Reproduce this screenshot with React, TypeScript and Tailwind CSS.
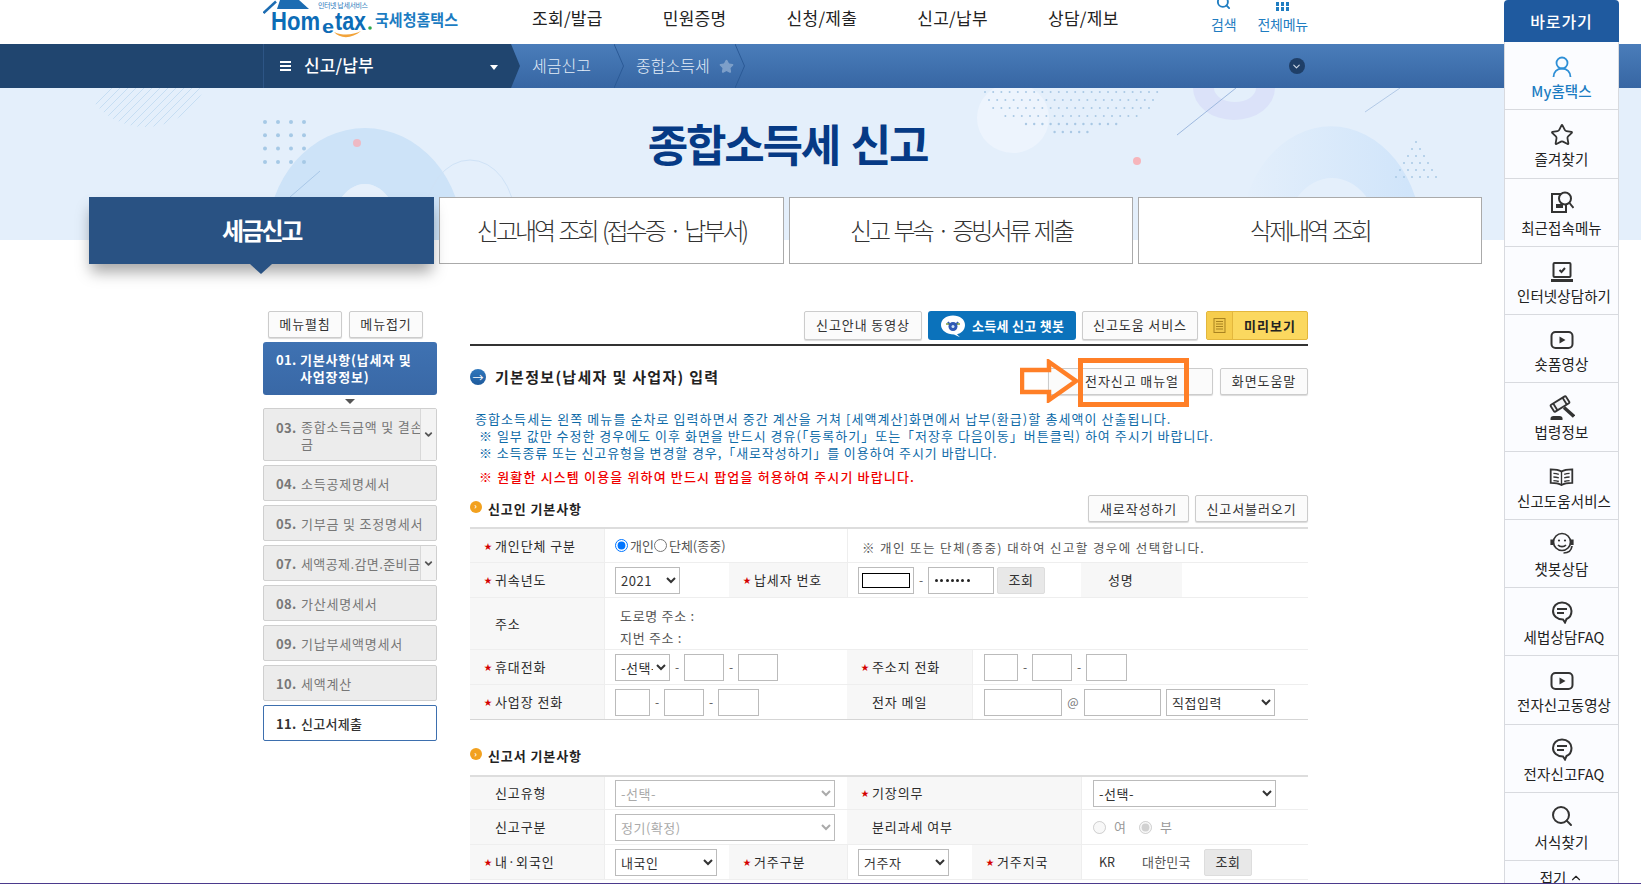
import { ChevronDown, ChevronUp, Search, Star } from 'lucide-react';
import type { ReactNode } from 'react';

const sideIcon = 'h-[24px] w-[24px] text-[#333]';

function UserIcon() {
  return (
    <svg viewBox="0 0 24 24" className="h-[24px] w-[24px] text-[#2e8fd6]" fill="none" stroke="currentColor" strokeWidth="1.8">
      <circle cx="12" cy="8" r="5.5" />
      <path d="M3.5 22c0-5 3.5-8.500 8.500-8.500s8.500 3.500 8.500 8.500" />
    </svg>
  );
}

function RecentIcon() {
  return (
    <svg viewBox="0 0 24 24" className="h-[24px] w-[24px] -translate-y-[2px] text-[#333]" fill="none" stroke="currentColor" strokeWidth="2">
      <path d="M11 4H2v18h14v-7" />
      <circle cx="15" cy="8.500" r="6" />
      <path d="M19.500 13l4 5" />
      <path d="M6 14h7v4H6z" fill="currentColor" stroke="none" />
    </svg>
  );
}

function LaptopIcon() {
  return (
    <svg viewBox="0 0 24 24" className={sideIcon} fill="none" stroke="currentColor" strokeWidth="2">
      <rect x="3.500" y="3" width="17" height="14" rx="1" />
      <path d="M1 20.500h22" strokeWidth="3" />
      <path d="M9.500 10l2 2 3.500-4" />
    </svg>
  );
}

function PlayIcon() {
  return (
    <svg viewBox="0 0 24 24" className={sideIcon} fill="none" stroke="currentColor" strokeWidth="2">
      <rect x="1.500" y="4" width="21" height="16" rx="4" />
      <path d="M9.500 8.500l6 3.500-6 3.500z" fill="currentColor" stroke="none" />
    </svg>
  );
}

function GavelIcon() {
  return (
    <svg viewBox="0 0 26 26" className="h-[26px] w-[26px] text-[#333] -my-[1px]" fill="none" stroke="currentColor" strokeWidth="1.800">
      <g transform="rotate(-32 11 9)">
        <rect x="2" y="5" width="18" height="8" rx="1" fill="#f2f3f6" />
        <path d="M5.500 5v8M16.500 5v8" />
      </g>
      <path d="M15 12.500l10 9" strokeWidth="3.400" />
      <path d="M1.500 25v-1.500c0-1.500 1-2.500 3-2.500h6c2 0 3 1 3 2.500V25z" fill="currentColor" stroke="none" />
    </svg>
  );
}

function BookIcon() {
  return (
    <svg viewBox="0 0 26 20" className="my-[3px] h-[18px] w-[25px] text-[#333]" fill="none" stroke="currentColor" strokeWidth="2">
      <path d="M13 4C10 2 6 1.500 1 1.500v15c5 0 9 .5 12 2.500 3-2 7-2.500 12-2.500v-15C20 1.500 16 2 13 4z" />
      <path d="M13 4v15M4 6c2 0 4 .3 6 1M4 10c2 0 4 .3 6 1M4 14c2 0 4 .3 6 1M22 6c-2 0-4 .3-6 1M22 10c-2 0-4 .3-6 1M22 14c-2 0-4 .3-6 1" strokeWidth="1.500" />
    </svg>
  );
}

function BotIcon() {
  return (
    <svg viewBox="0 0 26 24" className="h-[24px] w-[26px] -translate-y-[2px] text-[#333]" fill="none" stroke="currentColor" strokeWidth="1.700">
      <circle cx="13" cy="11" r="8.500" />
      <path d="M3 14V8.500M23 14V8.500" strokeWidth="3.200" />
      <circle cx="10" cy="9.500" r="1.100" fill="currentColor" stroke="none" />
      <circle cx="16" cy="9.500" r="1.100" fill="currentColor" stroke="none" />
      <path d="M9 14c2 2.200 6 2.200 8 0M23 15c-.5 4-3.500 7-8.500 7" />
    </svg>
  );
}

function FaqIcon() {
  return (
    <svg viewBox="0 0 24 24" className="h-[24px] w-[24px] -translate-y-[1px] text-[#333]" fill="none" stroke="currentColor" strokeWidth="2">
      <path d="M12 2.500c5.500 0 9.500 3.800 9.500 8.500 0 4-2.500 7-5 8l-1.500 3.500-2-3c-6 0-10-3.800-10-8.500S6.500 2.500 12 2.500z" />
      <path d="M7 9h10M7 13h7" strokeWidth="2.200" />
    </svg>
  );
}

function ChatbotBadge() {
  return (
    <svg viewBox="0 0 26 24" className="mr-[6px] h-[24px] w-[26px] shrink-0">
      <path d="M13 1.500c7 0 12 4 12 9.500 0 5-4 8.500-8 9.200l3 3-6-2.700C7 20.500 1 16.500 1 11S6 1.500 13 1.500z" fill="#fff" />
      <path d="M8 8l2 3M18 8l-2 3" stroke="#2f58b5" strokeWidth="2" />
      <path d="M6 10l14 0" stroke="#7c9a3c" strokeWidth="1.500" />
      <circle cx="13" cy="12.500" r="4.500" fill="#2f58b5" />
      <circle cx="13" cy="12.500" r="1.500" fill="#cfe3f7" />
    </svg>
  );
}

const sideItems: { icon: ReactNode; label: string; active?: boolean }[] = [
  { icon: <UserIcon />, label: 'My홈택스', active: true },
  { icon: <Star className={sideIcon} strokeWidth={1.800} />, label: '즐겨찾기' },
  { icon: <RecentIcon />, label: '최근접속메뉴' },
  { icon: <LaptopIcon />, label: '인터넷상담하기' },
  { icon: <PlayIcon />, label: '숏폼영상' },
  { icon: <GavelIcon />, label: '법령정보' },
  { icon: <BookIcon />, label: '신고도움서비스' },
  { icon: <BotIcon />, label: '챗봇상담' },
  { icon: <FaqIcon />, label: '세법상담FAQ' },
  { icon: <PlayIcon />, label: '전자신고동영상' },
  { icon: <FaqIcon />, label: '전자신고FAQ' },
  { icon: <Search className="h-[24px] w-[24px] -translate-y-[2px] text-[#333]" strokeWidth={2} />, label: '서식찾기' },
];

const topMenu = ['조회/발급', '민원증명', '신청/제출', '신고/납부', '상담/제보'];

function Logo() {
  return (
    <svg viewBox="0 0 197 44" className="h-[44px] w-[197px] shrink-0">
      <path d="M14 9 L17 0 L36 0 L46 9 Z" fill="#1c6cb2" />
      <path d="M0.500 13 L13 1.500" stroke="#1c6cb2" strokeWidth="2.500" fill="none" />
      <text x="55" y="8" fontSize="7" fill="#2a78bb" textLength="50">인터넷 납세서비스</text>
      <text fontWeight="700" fill="#0c6cb6" fontFamily="Liberation Sans">
        <tspan x="8" y="30" fontSize="26" textLength="49" lengthAdjust="spacingAndGlyphs">Hom</tspan>
        <tspan x="59" y="33" fontSize="19" textLength="12" lengthAdjust="spacingAndGlyphs">e</tspan>
        <tspan x="72" y="30" fontSize="26" textLength="31" lengthAdjust="spacingAndGlyphs">tax</tspan>
      </text>
      <circle cx="107" cy="28" r="1.800" fill="#2ba84a" />
      <path d="M71 32 C77 39 89 39 98 31 C90 35 80 36 71 32 Z" fill="#f2a33a" />
      <text x="112" y="26" fontSize="15.500" fontWeight="700" fill="#1c7cc2" textLength="83" lengthAdjust="spacingAndGlyphs">국세청홈택스</text>
    </svg>
  );
}

function HeroArt() {
  const dots: ReactNode[] = [];
  // dotted half circle under the nav bar
  for (let r = 0; r < 6; r++) {
    for (let c = 0; c < 22; c++) {
      const x = 985 + c * 8.200 + (r % 2 ? 4 : 0);
      const y = 92 + r * 8;
      const dx = x - 1071;
      const dy = y - 88;
      if (dx * dx + dy * dy * 3.800 < 88 * 88) {
        dots.push(<circle key={`${r}-${c}`} cx={x} cy={y} r={r > 3 ? 1.200 : 1} fill="#a9c8e4" />);
      }
    }
  }
  const grid: ReactNode[] = [];
  for (let r = 0; r < 4; r++) {
    for (let c = 0; c < 4; c++) {
      grid.push(<circle key={`g${r}-${c}`} cx={265 + c * 13} cy={122 + r * 13.300} r="2" fill="#a6c9e6" />);
    }
  }
  const tri: ReactNode[] = [];
  for (let r = 0; r < 6; r++) {
    for (let c = 0; c <= r; c++) {
      tri.push(<circle key={`t${r}-${c}`} cx={1412 - r * 4 + c * 8 + 4} cy={142 + r * 7} r="1" fill="#a9c8e4" />);
    }
  }
  const hatch: ReactNode[] = [];
  for (let i = 0; i < 24; i++) {
    hatch.push(<line key={i} x1={60 + i * 8} y1={140} x2={60 + i * 8 + 60} y2={80} stroke="#c6def3" strokeWidth="1" />);
  }
  return (
    <svg viewBox="0 88 1641 152" className="absolute inset-0 h-full w-full">
      <defs>
        <clipPath id="hatch-clip">
          <circle cx="145" cy="62" r="65" />
        </clipPath>
        <linearGradient id="arch-fade" x1="0" x2="1" y1="0" y2="0">
          <stop offset="0" stopColor="#e4effb" />
          <stop offset="1" stopColor="#cfe4fa" />
        </linearGradient>
      </defs>
      <g clipPath="url(#hatch-clip)">{hatch}</g>
      <path d="M267 240a98 112 0 0 1 196 0h-62a36 56 0 0 0-72 0z" fill="#cde3f8" />
      <path d="M329 240a36 56 0 0 1 72 0z" fill="#e6f0fb" />
      <ellipse cx="470" cy="220" rx="45" ry="60" fill="none" stroke="#cfe2f6" strokeWidth="1" />
      {grid}
      <ellipse cx="357" cy="143" rx="4" ry="4" fill="#eeb9c4" />
      <line x1="290" y1="197" x2="320" y2="171" stroke="#a9c8e8" strokeWidth="1" />
      <ellipse cx="1013" cy="118" rx="36" ry="35" fill="#edf4fd" />
      {dots}
      <path d="M1193 88a41 32 0 0 0 82 0h-19a21 14 0 0 1-42 0z" fill="#dbe2f9" />
      <line x1="1177" y1="135" x2="1236" y2="88" stroke="#9db8de" strokeWidth="1" />
      <line x1="1365" y1="112" x2="1400" y2="88" stroke="#b2c9e6" strokeWidth="1" />
      <ellipse cx="1137" cy="161" rx="4" ry="4" fill="#f6b5bb" />
      <path d="M1240 240a80 100 0 0 1 182 0h-42a48 62 0 0 0-96 0z" fill="url(#arch-fade)" />
      {tri}
    </svg>
  );
}

function Tab({ children, active, wide }: { children: ReactNode; active?: boolean; wide?: boolean }) {
  if (active) {
    return (
      <div className="relative flex h-[67px] w-[345px] items-center justify-center bg-[#295283] pb-[2px] text-[24px] font-semibold tracking-[-2.300px] text-white shadow-[0_10px_14px_-2px_rgba(0,0,0,0.35)]">
        {children}
        <span className="absolute left-[161px] top-[67px] h-0 w-0 border-x-[11px] border-t-[10px] border-x-transparent border-t-[#295283]" />
      </div>
    );
  }
  return (
    <div className={`flex h-[67px] items-center justify-center border border-[#aaaaaa] bg-white pb-[2px] text-[24px] font-light tracking-[-3px] [word-spacing:3px] text-[#333] ${wide ? 'w-[345px]' : 'w-[344px]'}`}>
      {children}
    </div>
  );
}

function Btn({ children, className = '' }: { children: ReactNode; className?: string }) {
  return (
    <button className={`flex h-[27px] items-center justify-center rounded-[2px] border border-[#ccc] bg-[#fbfbfb] text-[13px] tracking-[0.900px] text-[#333] shadow-[0_1px_1px_rgba(0,0,0,0.15)] ${className}`}>
      {children}
    </button>
  );
}

function GrayBtn({ children, className = '' }: { children: ReactNode; className?: string }) {
  return (
    <button className={`flex h-[27px] w-[48px] items-center justify-center rounded-[2px] border border-[#ddd] bg-[#e8e8e8] text-[13px] tracking-[0.500px] text-[#333] ${className}`}>
      {children}
    </button>
  );
}

function SideStep({ no, lines, arrow, tall, track = 'tracking-[0.800px]' }: { no: string; lines: string[]; arrow?: boolean; tall?: boolean; track?: string }) {
  return (
    <div className={`flex rounded-[2px] border border-[#cfcfcf] bg-[#ececec] text-[13px] text-[#777] ${track} ${tall ? 'h-[53px]' : 'h-[36px]'}`}>
      <div className="flex min-w-0 flex-1 pl-[12px]">
        <span className={`w-[25px] shrink-0 font-bold tracking-[0.300px] ${tall ? 'pt-[9px]' : 'mt-[1px] self-center'}`}>{no}</span>
        <div className={`min-w-0 overflow-hidden whitespace-nowrap ${tall ? 'pt-[9px] leading-[17px]' : 'mt-[1px] self-center'}`}>
          {lines.map((l) => (
            <div key={l}>{l}</div>
          ))}
        </div>
      </div>
      {arrow && (
        <div className="flex w-[16px] shrink-0 items-center justify-center border-l border-[#d8d8d8] bg-[#f3f3f3]">
          <ChevronDown className="h-[11px] w-[11px] text-[#555]" strokeWidth={4} />
        </div>
      )}
    </div>
  );
}

function Th({ children, w, req }: { children?: ReactNode; w: string; req?: boolean }) {
  return (
    <div className={`flex shrink-0 items-center bg-[#f7f7f7] pl-[14px] text-[13px] tracking-[0.900px] text-[#2b2b2b] ${w}`}>
      <span className="w-[11px] shrink-0 text-[8px] leading-none text-[#d40000]">{req ? '★' : ''}</span>
      <span className="whitespace-nowrap">{children}</span>
    </div>
  );
}

function Td({ children, w, pad = 'pl-[10px]' }: { children?: ReactNode; w: string; pad?: string }) {
  return <div className={`flex shrink-0 items-center border-l border-[#eeeeee] text-[13px] ${pad} ${w}`}>{children}</div>;
}

function Row({ children, h = 'h-[35px]', last }: { children: ReactNode; h?: string; last?: boolean }) {
  return <div className={`flex border-b ${last ? 'border-[#d5d5d5]' : 'border-[#eeeeee]'} ${h}`}>{children}</div>;
}

function Input({ w, children }: { w: string; children?: ReactNode }) {
  return <div className={`flex h-[27px] shrink-0 items-center border border-[#bbbbbb] bg-white ${w}`}>{children}</div>;
}

function Dash() {
  return <span className="w-[14px] shrink-0 text-center text-[12px] text-[#555]">-</span>;
}

function Sel({ w, value, disabled }: { w: string; value: string; disabled?: boolean }) {
  return (
    <select disabled={disabled} defaultValue={value} className={`h-[27px] shrink-0 border border-[#bbbbbb] bg-white pl-[1px] text-[13px] tracking-[0.500px] ${disabled ? 'text-[#aaa]' : 'text-[#333]'} ${w}`}>
      <option>{value}</option>
    </select>
  );
}

function SubHead({ children }: { children: ReactNode }) {
  return (
    <div className="flex items-center gap-[6px] text-[13px] font-bold tracking-[0.900px] text-[#222]">
      <span className="mb-[4px] flex h-[12px] w-[12px] items-center justify-center rounded-full bg-[#f2a11f]">
        <span className="mb-[0.500px] text-[8px] leading-none text-white">›</span>
      </span>
      {children}
    </div>
  );
}

export default function App() {
  return (
    <div className="relative h-[884px] w-[1641px] overflow-hidden bg-white font-['Noto_Sans_CJK_KR','Liberation_Sans',sans-serif] text-[#333]">
      {/* top header */}
      <div className="flex h-[44px] items-center pl-[263px]">
        <Logo />
        <div className="ml-[72px] flex gap-[60px] pb-[8px] text-[17px] tracking-[0.300px] text-[#222]">
          {topMenu.map((m) => (
            <span key={m}>{m}</span>
          ))}
        </div>
        <div className="ml-[92px] flex gap-[20px] self-start text-[14px] tracking-[-0.300px] text-[#1f7dc1]">
          <div className="flex w-[26px] flex-col items-center">
            <Search className="-mt-[5px] h-[15px] w-[15px]" strokeWidth={3} />
            <span className="mt-[2px] leading-[24px]">검색</span>
          </div>
          <div className="flex w-[52px] flex-col items-center">
            <div className="grid h-[10px] grid-cols-3 gap-[1.500px] pt-[2px]">
              {[0, 1, 2, 3, 4, 5].map((i) => (
                <span key={i} className="h-[3.500px] w-[3.500px] bg-[#1f7dc1]" />
              ))}
            </div>
            <span className="mt-[2px] leading-[24px]">전체메뉴</span>
          </div>
        </div>
      </div>

      {/* nav bar */}
      <div className="flex h-[44px] items-center bg-gradient-to-b from-[#4a7dba] to-[#3766a3] text-white">
        <div className="h-full w-[520px] shrink-0 bg-[#20456f] pl-[263px] [clip-path:polygon(0_0,511px_0,520px_22px,511px_44px,0_44px)]">
          <div className="flex h-full items-center border-l border-[#2d5585] pl-[16px] pr-[22px]">
            <div className="flex flex-col gap-[2px]">
              <span className="h-[2px] w-[11px] bg-white" />
              <span className="h-[2px] w-[11px] bg-white" />
              <span className="h-[2px] w-[11px] bg-white" />
            </div>
            <span className="ml-[13px] mb-[2px] text-[17px] font-medium tracking-[0.100px]">신고/납부</span>
            <span className="ml-auto mt-[2px] h-0 w-0 border-x-[4px] border-t-[5px] border-x-transparent border-t-white" />
          </div>
        </div>
        <span className="ml-[12px] mb-[2px] w-[82px] text-[16px] font-light text-[#e4edf8]">세금신고</span>
        <svg viewBox="0 0 10 44" className="h-[44px] w-[10px] shrink-0" fill="none" stroke="#2b5a96" strokeWidth="1">
          <path d="M0 0l9.500 22L0 44" />
        </svg>
        <span className="ml-[12px] mb-[2px] whitespace-nowrap text-[16px] font-light text-[#e4edf8]">종합소득세</span>
        <Star className="ml-[9px] h-[15px] w-[15px] fill-[#7d9fc9] text-[#7d9fc9]" />
        <svg viewBox="0 0 10 44" className="ml-[1px] h-[44px] w-[10px] shrink-0" fill="none" stroke="#2b5a96" strokeWidth="1">
          <path d="M0 0l9.500 22L0 44" />
        </svg>
        <span className="ml-[544px] flex h-[16px] w-[16px] items-center justify-center rounded-full bg-[#1f3f68]">
          <ChevronDown className="h-[11px] w-[11px] text-[#cfd9e6]" strokeWidth={2.500} />
        </span>
      </div>

      {/* hero */}
      <div className="relative h-[152px] bg-[#e4effb]">
        <HeroArt />
        <h1 className="relative pr-[66px] pt-[27px] text-center text-[44px] font-bold leading-[56px] tracking-[-2.200px] [word-spacing:4px] text-[#063a85]">
          종합소득세 신고
        </h1>
      </div>

      {/* tabs */}
      <div className="relative -mt-[43px] flex gap-[5px] pl-[89px]">
        <Tab active>세금신고</Tab>
        <Tab wide>신고내역 조회 (접수증 · 납부서)</Tab>
        <Tab>신고 부속 · 증빙서류 제출</Tab>
        <Tab>삭제내역 조회</Tab>
      </div>

      {/* body */}
      <div className="flex pl-[263px] pt-[47px]">
        <div className="w-[174px] shrink-0">
          <div className="flex gap-[7px] pl-[5px]">
            <Btn className="w-[74px] bg-[#eeeeee] pb-[2px] tracking-[0.500px]">메뉴펼침</Btn>
            <Btn className="w-[74px] bg-[#eeeeee] pb-[2px] tracking-[0.500px]">메뉴접기</Btn>
          </div>
          <div className="mt-[4px] flex h-[53px] rounded-[3px] bg-gradient-to-b from-[#3f72b2] to-[#3968a6] pl-[13px] pt-[9px] text-[13px] font-bold leading-[17px] tracking-[0.800px] text-white">
            <span className="w-[24px] shrink-0 tracking-[0.300px]">01.</span>
            <span>
              기본사항(납세자 및
              <br />
              사업장정보)
            </span>
          </div>
          <div className="mx-auto my-[4px] h-0 w-0 border-x-[5px] border-t-[5px] border-x-transparent border-t-[#555]" />
          <div className="flex flex-col gap-[4px]">
            <SideStep tall arrow no="03." lines={['종합소득금액 및 결손', '금']} />
            <SideStep no="04." lines={['소득공제명세서']} />
            <SideStep no="05." lines={['기부금 및 조정명세서']} />
            <SideStep arrow track="tracking-[0.400px]" no="07." lines={['세액공제.감면.준비금']} />
            <SideStep no="08." lines={['가산세명세서']} />
            <SideStep no="09." lines={['기납부세액명세서']} />
            <SideStep no="10." lines={['세액계산']} />
            <div className="flex h-[36px] items-center rounded-[2px] border border-[#3d6fae] bg-white pl-[12px] pt-[2px] text-[13px] font-medium tracking-[0.300px] text-[#333]">
              <span className="w-[25px] font-bold">11.</span>
              신고서제출
            </div>
          </div>
        </div>

        <div className="ml-[33px] w-[838px] shrink-0">
          <div className="flex h-[29px] justify-end gap-[6px]">
            <Btn className="h-[29px] w-[118px] pb-[2px]">신고안내 동영상</Btn>
            <button className="flex h-[29px] w-[148px] items-center rounded-[3px] bg-[#0b72bb] pl-[12px] text-[13px] font-bold tracking-[0.300px] text-white">
              <ChatbotBadge />
              소득세 신고 챗봇
            </button>
            <Btn className="mr-[2px] h-[29px] w-[116px] pb-[2px]">신고도움 서비스</Btn>
            <button className="flex h-[29px] w-[102px] items-center rounded-[2px] border border-[#e3b73d] bg-[#fbd85f] text-[13px] font-bold tracking-[1px] text-[#222]">
              <span className="flex h-full w-[26px] items-center justify-center border-r border-[#e3b73d] bg-[#f6cd4d]">
                <svg viewBox="0 0 13 15" className="h-[15px] w-[13px]" fill="none" stroke="#a98320" strokeWidth="1">
                  <rect x="1" y="0.500" width="11" height="14" fill="#f1c94f" />
                  <path d="M3 3.500h7M3 6h7M3 8.500h7M3 11h7" />
                </svg>
              </span>
              <span className="flex-1 text-center">미리보기</span>
            </button>
          </div>
          <div className="mt-[4px] h-[2px] bg-[#333]" />

          <div className="mt-[22px] flex h-[27px] items-center">
            <span className="mb-[9px] flex h-[16px] w-[16px] items-center justify-center rounded-full bg-gradient-to-b from-[#2f78bd] to-[#1e5a9c] text-[11px] leading-none text-white">→</span>
            <span className="mb-[9px] ml-[9px] text-[15px] font-bold tracking-[1.300px] text-[#222]">기본정보(납세자 및 사업자) 입력</span>
            <Btn className="ml-auto w-[165px] pb-[2px] pl-[3px] text-[#222]">전자신고 매뉴얼</Btn>
            <Btn className="ml-[7px] w-[88px] pb-[2px]">화면도움말</Btn>
          </div>

          <div className="mt-[15px] pl-[5px] text-[13px] leading-[17px] tracking-[1.080px] text-[#0f6ba8]">
            <p>종합소득세는 왼쪽 메뉴를 순차로 입력하면서 중간 계산을 거쳐 [세액계산]화면에서 납부(환급)할 총세액이 산출됩니다.</p>
            <p className="pl-[4px] tracking-[1px]">※ 일부 값만 수정한 경우에도 이후 화면을 반드시 경유(「등록하기」또는「저장후 다음이동」버튼클릭) 하여 주시기 바랍니다.</p>
            <p className="pl-[4px] tracking-[0.900px]">※ 소득종류 또는 신고유형을 변경할 경우,「새로작성하기」를 이용하여 주시기 바랍니다.</p>
            <p className="mt-[7px] pl-[4px] font-medium tracking-[1.150px] text-[#f00000]">※ 원활한 시스템 이용을 위하여 반드시 팝업을 허용하여 주시기 바랍니다.</p>
          </div>

          <div className="mt-[10px] flex h-[27px] items-center">
            <SubHead>신고인 기본사항</SubHead>
            <Btn className="ml-auto w-[101px]">새로작성하기</Btn>
            <Btn className="ml-[6px] w-[113px]">신고서불러오기</Btn>
          </div>

          {/* 신고인 table */}
          <div className="mt-[5px] border-t-2 border-[#dddddd]">
            <Row h="h-[34px]">
              <Th w="w-[134px]" req>개인단체 구분</Th>
              <Td w="w-[243px]">
                <input type="radio" name="kind" defaultChecked className="h-[13px] w-[13px]" />
                <span className="ml-[2px] text-[#555]">개인</span>
                <input type="radio" name="kind" className="h-[13px] w-[13px]" />
                <span className="ml-[2px] text-[#555]">단체(종중)</span>
              </Td>
              <Td w="w-[461px]" pad="pl-[11px]">
                <span className="ml-[3px] mt-[5px] text-[12.500px] tracking-[1.400px] text-[#555]">※ 개인 또는 단체(종중) 대하여 신고할 경우에 선택합니다.</span>
              </Td>
            </Row>
            <Row>
              <Th w="w-[134px]" req>귀속년도</Th>
              <Td w="w-[125px]"><Sel w="w-[65px]" value="2021" /></Td>
              <Th w="w-[118px]" req>납세자 번호</Th>
              <Td w="w-[234px]">
                <Input w="w-[56px] justify-center">
                  <span className="h-[15px] w-[48px] border border-black" />
                </Input>
                <Dash />
                <Input w="w-[66px] gap-[2.300px] pl-[6px]">
                  {[0, 1, 2, 3, 4, 5, 6].map((i) => (
                    <span key={i} className="h-[3px] w-[3px] rounded-full bg-[#222]" />
                  ))}
                </Input>
                <GrayBtn className="ml-[3px]">조회</GrayBtn>
              </Td>
              <div className="flex w-[101px] shrink-0 items-center bg-[#f7f7f7] pl-[27px] text-[13px] tracking-[0.700px] text-[#2b2b2b]">성명</div>
              <div className="flex-1" />
            </Row>
            <Row h="h-[52px]">
              <Th w="w-[134px]">주소</Th>
              <div className="flex flex-col justify-center gap-[5px] border-l border-[#eeeeee] pl-[15px] pt-[6px] text-[13px] leading-[17px] tracking-[0.700px] text-[#555]">
                <span>도로명 주소 :</span>
                <span>지번 주소 :</span>
              </div>
            </Row>
            <Row>
              <Th w="w-[134px]" req>휴대전화</Th>
              <Td w="w-[243px]">
                <Sel w="w-[55px]" value="-선택-" />
                <Dash />
                <Input w="w-[40px]" />
                <Dash />
                <Input w="w-[40px]" />
              </Td>
              <Th w="w-[125px]" req>주소지 전화</Th>
              <Td w="w-[336px]" pad="pl-[11px]">
                <Input w="w-[34px]" />
                <Dash />
                <Input w="w-[40px]" />
                <Dash />
                <Input w="w-[41px]" />
              </Td>
            </Row>
            <Row last>
              <Th w="w-[134px]" req>사업장 전화</Th>
              <Td w="w-[243px]">
                <Input w="w-[35px]" />
                <Dash />
                <Input w="w-[40px]" />
                <Dash />
                <Input w="w-[41px]" />
              </Td>
              <Th w="w-[125px]">전자 메일</Th>
              <Td w="w-[336px]" pad="pl-[11px]">
                <Input w="w-[78px]" />
                <span className="w-[22px] text-center text-[12px] text-[#777]">@</span>
                <Input w="w-[77px]" />
                <Sel w="ml-[5px] w-[109px]" value="직접입력" />
              </Td>
            </Row>
          </div>

          <div className="mt-[26px] h-[20px]">
            <SubHead>신고서 기본사항</SubHead>
          </div>

          {/* 신고서 table */}
          <div className="mt-[9px] border-t-2 border-[#dddddd]">
            <Row h="h-[33px]">
              <Th w="w-[134px]">신고유형</Th>
              <Td w="w-[243px]"><Sel disabled w="w-[220px]" value="-선택-" /></Td>
              <Th w="w-[234px]" req>기장의무</Th>
              <Td w="w-[227px]" pad="pl-[11px]"><Sel w="w-[183px]" value="-선택-" /></Td>
            </Row>
            <Row>
              <Th w="w-[134px]">신고구분</Th>
              <Td w="w-[243px]"><Sel disabled w="w-[220px]" value="정기(확정)" /></Td>
              <Th w="w-[234px]">분리과세 여부</Th>
              <Td w="w-[227px]" pad="pl-[11px]">
                <input disabled type="radio" name="sep" className="h-[13px] w-[13px]" />
                <span className="ml-[8px] mr-[13px] text-[#999]">여</span>
                <input disabled type="radio" name="sep" defaultChecked className="h-[13px] w-[13px]" />
                <span className="ml-[8px] text-[#999]">부</span>
              </Td>
            </Row>
            <Row>
              <Th w="w-[134px]" req>내·외국인</Th>
              <Td w="w-[125px]"><Sel w="w-[102px]" value="내국인" /></Td>
              <Th w="w-[118px]" req>거주구분</Th>
              <Td w="w-[125px]"><Sel w="w-[91px]" value="거주자" /></Td>
              <Th w="w-[109px]" req>거주지국</Th>
              <Td w="w-[227px]" pad="pl-[11px]">
                <span className="ml-[6px] w-[43px] text-[12.500px] text-[#333]">KR</span>
                <span className="w-[62px] text-[13px] tracking-[0.200px] text-[#555]">대한민국</span>
                <GrayBtn>조회</GrayBtn>
              </Td>
            </Row>
          </div>
        </div>
      </div>

      {/* right quick menu */}
      <div className="absolute right-[22px] top-0 w-[115px]">
        <div className="flex h-[42px] items-center justify-center rounded-t-[4px] bg-[#1f5a9f] text-[16px] font-medium tracking-[0.900px] text-white">바로가기</div>
        <div className="border-x border-[#d8dadf] bg-[#fbfcff]">
          {sideItems.map((s) => (
            <div key={s.label} className="flex h-[68.250px] flex-col items-center border-b border-[#d8dadf] pt-[13px]">
              {s.icon}
              <span className={`mt-[2px] whitespace-nowrap text-[14.500px] leading-[20px] tracking-[0.100px] ${s.active ? 'font-medium text-[#1c7cc2]' : 'text-[#222]'} ${s.label.length === 7 ? 'ml-[5px]' : ''}`}>{s.label}</span>
            </div>
          ))}
          <div className="flex h-[30px] items-center justify-center gap-[3px] pt-[3px] text-[14.500px] text-[#222]">
            접기
            <ChevronUp className="h-[14px] w-[14px]" strokeWidth={2} />
          </div>
        </div>
      </div>

      {/* orange callout over the manual button */}
      <div className="absolute left-[1078px] top-[358px] h-[49px] w-[111px] border-[5px] border-[#ff7f27]" />
      <svg viewBox="0 0 60 44" className="absolute left-[1020px] top-[359px] h-[44px] w-[60px]" fill="none" stroke="#ff7f27" strokeWidth="4.500">
        <path d="M2 11h27V3l27 19-27 19v-8H2z" />
      </svg>

      {/* bottom edge line of the capture */}
      <div className="absolute inset-x-0 bottom-0 h-[1px] bg-[#4b3a8c]" />
    </div>
  );
}
